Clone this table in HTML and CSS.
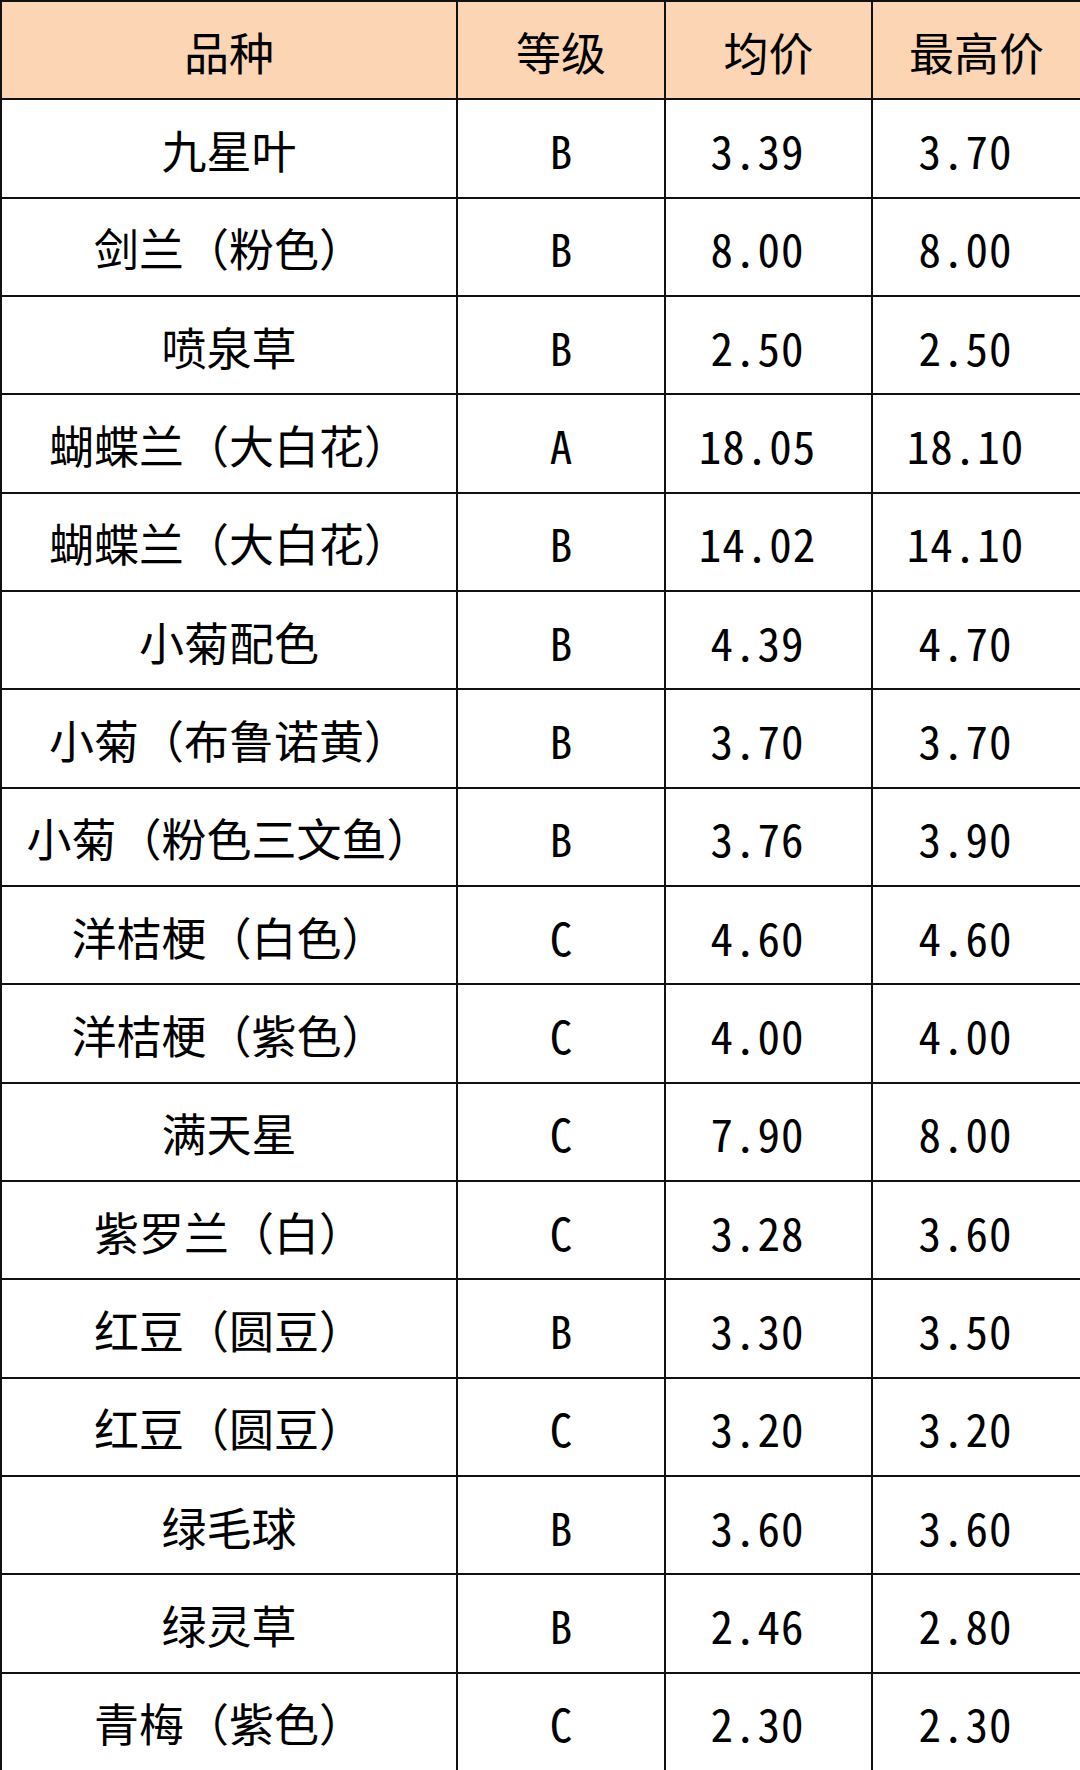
FILE: index.html
```html
<!DOCTYPE html>
<html lang="zh-CN">
<head>
<meta charset="utf-8">
<title>价格表</title>
<link rel="stylesheet" href="styles.css">
</head>
<body>
<table class="price-table">
  <colgroup>
    <col class="c-name">
    <col class="c-grade">
    <col class="c-avg">
    <col class="c-max">
  </colgroup>
  <thead>
    <tr><th>品种</th><th>等级</th><th>均价</th><th>最高价</th></tr>
  </thead>
  <tbody>
    <tr><td>九星叶</td><td>B</td><td class="num">3.39</td><td class="num">3.70</td></tr>
    <tr><td>剑兰（粉色）</td><td>B</td><td class="num">8.00</td><td class="num">8.00</td></tr>
    <tr><td>喷泉草</td><td>B</td><td class="num">2.50</td><td class="num">2.50</td></tr>
    <tr><td>蝴蝶兰（大白花）</td><td>A</td><td class="num">18.05</td><td class="num">18.10</td></tr>
    <tr><td>蝴蝶兰（大白花）</td><td>B</td><td class="num">14.02</td><td class="num">14.10</td></tr>
    <tr><td>小菊配色</td><td>B</td><td class="num">4.39</td><td class="num">4.70</td></tr>
    <tr><td>小菊（布鲁诺黄）</td><td>B</td><td class="num">3.70</td><td class="num">3.70</td></tr>
    <tr><td>小菊（粉色三文鱼）</td><td>B</td><td class="num">3.76</td><td class="num">3.90</td></tr>
    <tr><td>洋桔梗（白色）</td><td>C</td><td class="num">4.60</td><td class="num">4.60</td></tr>
    <tr><td>洋桔梗（紫色）</td><td>C</td><td class="num">4.00</td><td class="num">4.00</td></tr>
    <tr><td>满天星</td><td>C</td><td class="num">7.90</td><td class="num">8.00</td></tr>
    <tr><td>紫罗兰（白）</td><td>C</td><td class="num">3.28</td><td class="num">3.60</td></tr>
    <tr><td>红豆（圆豆）</td><td>B</td><td class="num">3.30</td><td class="num">3.50</td></tr>
    <tr><td>红豆（圆豆）</td><td>C</td><td class="num">3.20</td><td class="num">3.20</td></tr>
    <tr><td>绿毛球</td><td>B</td><td class="num">3.60</td><td class="num">3.60</td></tr>
    <tr><td>绿灵草</td><td>B</td><td class="num">2.46</td><td class="num">2.80</td></tr>
    <tr><td>青梅（紫色）</td><td>C</td><td class="num">2.30</td><td class="num">2.30</td></tr>
  </tbody>
</table>
</body>
</html>
```
FILE: styles.css
```css
html, body {
  margin: 0;
  padding: 0;
  background: #ffffff;
}

.price-table {
  width: 1080px;
  height: 1770px;
  border-collapse: collapse;
  table-layout: fixed;
  font-family: "Noto Sans Mono CJK SC", "Noto Sans CJK SC", sans-serif;
  font-size: 45px;
  color: #000000;
}

.c-name { width: 456px; }
.c-grade { width: 208px; }
.c-avg { width: 207px; }
.c-max { width: 209px; }

.price-table th,
.price-table td {
  border: 2px solid #111111;
  text-align: center;
  vertical-align: middle;
  padding: 2px 0 0 0;
  font-weight: normal;
  line-height: 1;
  white-space: nowrap;
}

.price-table td.num {
  padding-right: 22px;
  letter-spacing: 1px;
}

.price-table th {
  background: #fcd5b4;
}

.price-table tr {
  height: 98.33px;
}
```
